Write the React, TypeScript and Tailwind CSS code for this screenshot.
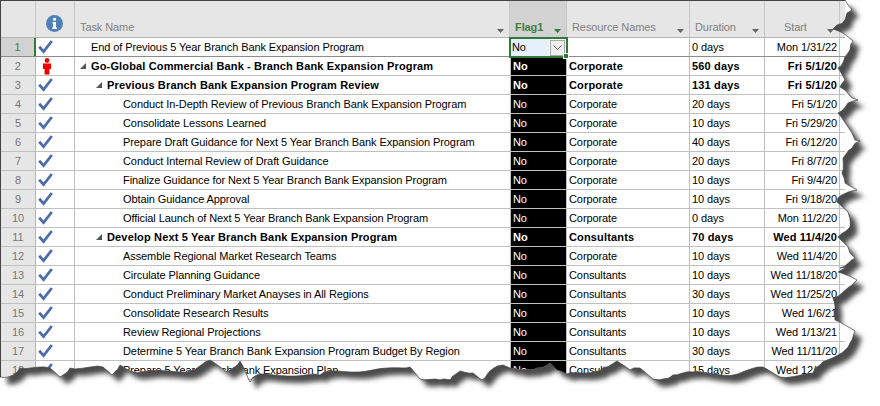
const rows = [
  { id: 1, task: "End of Previous 5 Year Branch Bank Expansion Program", level: 0, res: "", dur: "0 days", start: "Mon 1/31/22" },
  { id: 2, task: "Go-Global Commercial Bank - Branch Bank Expansion Program", level: 0, res: "Corporate", dur: "560 days", start: "Fri 5/1/20", bold: true },
  { id: 3, task: "Previous Branch Bank Expansion Program Review", level: 1, res: "Corporate", dur: "131 days", start: "Fri 5/1/20", bold: true },
  { id: 4, task: "Conduct In-Depth Review of Previous Branch Bank Expansion Program", level: 2, res: "Corporate", dur: "20 days", start: "Fri 5/1/20" },
  { id: 5, task: "Consolidate Lessons Learned", level: 2, res: "Corporate", dur: "10 days", start: "Fri 5/29/20" },
  { id: 6, task: "Prepare Draft Guidance for Next 5 Year Branch Bank Expansion Program", level: 2, res: "Corporate", dur: "40 days", start: "Fri 6/12/20" },
  { id: 7, task: "Conduct Internal Review of Draft Guidance", level: 2, res: "Corporate", dur: "20 days", start: "Fri 8/7/20" },
  { id: 8, task: "Finalize Guidance for Next 5 Year Branch Bank Expansion Program", level: 2, res: "Corporate", dur: "10 days", start: "Fri 9/4/20" },
  { id: 9, task: "Obtain Guidance Approval", level: 2, res: "Corporate", dur: "10 days", start: "Fri 9/18/20" },
  { id: 10, task: "Official Launch of Next 5 Year Branch Bank Expansion Program", level: 2, res: "Corporate", dur: "0 days", start: "Mon 11/2/20" },
  { id: 11, task: "Develop Next 5 Year Branch Bank Expansion Program", level: 1, res: "Consultants", dur: "70 days", start: "Wed 11/4/20", bold: true },
  { id: 12, task: "Assemble Regional Market Research Teams", level: 2, res: "Corporate", dur: "10 days", start: "Wed 11/4/20" },
  { id: 13, task: "Circulate Planning Guidance", level: 2, res: "Consultants", dur: "10 days", start: "Wed 11/18/20" },
  { id: 14, task: "Conduct Preliminary Market Anayses in All Regions", level: 2, res: "Consultants", dur: "30 days", start: "Wed 11/25/20" },
  { id: 15, task: "Consolidate Research Results", level: 2, res: "Consultants", dur: "10 days", start: "Wed 1/6/21" },
  { id: 16, task: "Review Regional Projections", level: 2, res: "Consultants", dur: "10 days", start: "Wed 1/13/21" },
  { id: 17, task: "Determine 5 Year Branch Bank Expansion Program Budget By Region", level: 2, res: "Consultants", dur: "30 days", start: "Wed 11/11/20" },
  { id: 18, task: "Prepare 5 Year Branch Bank Expansion Plan", level: 2, res: "Consultants", dur: "15 days", start: "Wed 12/2/20" },
];

// torn paper edge, traced clockwise from the top right corner
const traced =
  "845,0 848,5 852,10 847,13 845,20 837,25 833,29 843,33 853,41 850,50 845,57 838,68 845,80 840,87 845,90 852,98 858,100 848,103 838,113 848,127 852,133 855,140 860,141 852,148 843,158 842,173 845,183 857,190 838,198 837,202 848,212 850,227 838,237 848,247 850,253 855,258 840,268 848,265 838,272 857,280 852,285 833,298 835,310 835,320 855,331 850,343 838,355 820,365 813,373 807,374 780,377 763,367 733,375 693,372 673,375 663,379 653,379 640,368 630,370 617,361 603,368 587,373 567,374 557,370 550,363 537,368 520,370 510,368 503,365 490,371 482,380 473,373 460,371 450,380 440,380 420,379 410,367 367,371 333,371 320,375 257,375 250,382 240,361 227,372 210,360 190,371 133,372 120,365 112,375 103,367 70,368 60,377 50,368 20,368 8,377 0,377";

// roughen long segments a little so the tear doesn't look like straight lines
function roughen(points: string) {
  const pts = points.split(" ").map((p) => p.split(",").map(Number));
  const out: string[] = [];
  pts.forEach(([x, y], i) => {
    out.push(`${x},${y}`);
    const next = pts[i + 1];
    if (!next) return;
    const steps = Math.floor(Math.hypot(next[0] - x, next[1] - y) / 4);
    for (let s = 1; s < steps; s++) {
      const t = s / steps;
      const nudge = Math.sin(out.length * 12.9898) * 1.1;
      out.push(`${(x + (next[0] - x) * t + nudge).toFixed(1)},${(y + (next[1] - y) * t + nudge).toFixed(1)}`);
    }
  });
  return out.join(" ");
}

const edge = roughen(traced);

function Check() {
  return (
    <svg width="15" height="14" viewBox="0 0 15 14">
      <path d="M1.2 6.8 L5.6 11.6 L13.8 1" fill="none" stroke="#4c6cab" strokeWidth="2.8" />
    </svg>
  );
}

function Person() {
  return (
    <svg width="10" height="17" viewBox="0 0 10 17">
      <circle cx="5" cy="2.5" r="2.4" fill="#f00000" />
      <path d="M1 5.5 H9 V11 H7.4 V16.5 H2.6 V11 H1 Z" fill="#f00000" />
    </svg>
  );
}

function Info() {
  return (
    <svg width="17" height="17" viewBox="0 0 17 17">
      <circle cx="8.5" cy="8.5" r="8.5" fill="#4f81b8" />
      <rect x="7" y="3" width="3" height="2.6" fill="#fff" />
      <path d="M6.5 7 H10 V12.5 H11 V14 H6.2 V12.5 H7.2 V8.4 H6.5 Z" fill="#fff" />
    </svg>
  );
}

function Collapse() {
  return (
    <svg width="6" height="6" viewBox="0 0 6 6" className="shrink-0">
      <path d="M6 0 V6 H0 Z" fill="#555" />
    </svg>
  );
}

function HeaderCell({ label, className, sortClass }: { label: string; className: string; sortClass?: string }) {
  return (
    <div className={`flex items-end justify-between border-r border-[#c6c6c6] pb-[2px] ${className}`}>
      <span>{label}</span>
      <svg width="7" height="4" viewBox="0 0 7 4" className={`mb-[2px] ${sortClass ?? ""}`}>
        <path d="M0 0 H7 L3.5 4 Z" fill="currentColor" />
      </svg>
    </div>
  );
}

function Row({ r }: { r: (typeof rows)[number] }) {
  const selected = r.id === 1;
  const indent = ["pl-[16px]", "pl-[32px]", "pl-[48px]"][r.level];
  const hasChildren = r.id === 2 || r.id === 3 || r.id === 11;
  return (
    <div className={`flex h-[19px] border-b ${selected ? "border-[#8c8c8c]" : "border-[#c0c0c0]"} ${r.bold ? "font-bold tracking-[0.15px]" : ""}`}>
      <div
        className={`flex w-[35px] shrink-0 items-center justify-center border-r font-normal ${
          selected ? "border-r-2 border-[#2f7a3b] bg-[#d2d2d2] font-bold text-[#3f7f3f]" : "border-[#b4b4b4] bg-[#e6e6e6] text-[#777]"
        }`}
      >
        {r.id}
      </div>
      <div className={`flex w-[39px] shrink-0 items-center border-r border-[#c0c0c0] ${r.id === 2 ? "pl-[6px]" : "pl-[2px]"}`}>
        {r.id === 2 ? <Person /> : <Check />}
      </div>
      <div className={`relative flex w-[435px] shrink-0 items-center whitespace-nowrap ${indent}`}>
        {hasChildren && (
          <span className={`absolute top-[6px] ${r.level === 0 ? "left-[5px]" : "left-[21px]"}`}>
            <Collapse />
          </span>
        )}
        {r.task}
      </div>
      {selected ? (
        <div className="relative z-10 -my-[1px] -ml-[1px] mr-0 flex h-[21px] w-[59px] shrink-0 items-center border-2 border-[#2f7a3b] bg-white">
          <div className="flex h-full flex-1 items-center bg-[#e6f0fb] pl-[1px]">No</div>
          <div className="mx-[1px] flex h-[16px] w-[15px] items-center justify-center border border-[#a8a8a8] bg-[#efefef]">
            <svg width="9" height="5" viewBox="0 0 9 5">
              <path d="M0.5 0.5 L4.5 4.5 L8.5 0.5" fill="none" stroke="#666" />
            </svg>
          </div>
          <div className="absolute -bottom-[3px] -right-[3px] h-[6px] w-[6px] border border-white bg-[#2f7a3b]" />
        </div>
      ) : (
        <div className="flex w-[57px] shrink-0 items-center border-x border-[#c0c0c0] bg-black pl-[2px] text-white">No</div>
      )}
      <div className={`flex shrink-0 items-center border-r border-[#c0c0c0] pl-[2px] ${selected ? "w-[122px]" : "w-[123px]"}`}>{r.res}</div>
      <div className="flex w-[75px] shrink-0 items-center border-r border-[#c0c0c0] pl-[2px]">{r.dur}</div>
      <div className="flex w-[75px] shrink-0 items-center justify-end border-r border-[#c0c0c0] pr-[2px]">{r.start}</div>
    </div>
  );
}

export default function App() {
  return (
    <div className="relative h-[406px] w-[880px] overflow-hidden bg-white font-['Liberation_Sans',Arial,sans-serif] text-[11px] tracking-[-0.09px] text-black">
      <div className="w-[845px] border-l border-t border-[#444]">
        <div className="flex h-[37px] border-b border-[#b4b4b4] bg-[#e6e6e6] text-[#808080]">
          <div className="w-[35px] shrink-0 border-r border-[#c6c6c6]" />
          <div className="flex w-[39px] shrink-0 items-start justify-center border-r border-[#c6c6c6] pt-[14px] pr-[1px]">
            <Info />
          </div>
          <HeaderCell label="Task Name" className="w-[435px] shrink-0 pl-[5px] pr-[5px]" sortClass="text-[#666]" />
          <HeaderCell label="Flag1" className="w-[57px] shrink-0 bg-[#d2d2d2] pl-[5px] pr-[5px] font-bold text-[#3f7f3f]" sortClass="text-[#2f7a3b]" />
          <HeaderCell label="Resource Names" className="w-[123px] shrink-0 pl-[5px] pr-[5px]" sortClass="text-[#666]" />
          <HeaderCell label="Duration" className="w-[75px] shrink-0 pl-[5px] pr-[5px]" sortClass="text-[#666]" />
          <HeaderCell label="Start" className="w-[75px] shrink-0 pl-[19px] pr-[5px]" sortClass="text-[#666]" />
        </div>
        {rows.map((r) => (
          <Row key={r.id} r={r} />
        ))}
      </div>

      {/* torn paper effect over the screenshot */}
      <svg width="880" height="406" viewBox="0 0 880 406" className="absolute left-0 top-0 z-20">
        <defs>
          <filter id="soft" x="-5%" y="-5%" width="110%" height="110%">
            <feGaussianBlur stdDeviation="2.5" />
          </filter>
          <clipPath id="outside">
            <path clipRule="evenodd" d={`M0 0H880V406H0Z M0 0 L${edge} Z`} />
          </clipPath>
        </defs>
        <path fillRule="evenodd" fill="#fff" d={`M0 0H880V406H0Z M0 0 L${edge} Z`} />
        <g clipPath="url(#outside)">
          <path transform="translate(7 7)" d={`M0 0 L${edge} Z`} fill="#4c4c4c" filter="url(#soft)" />
        </g>
        <polyline points={edge} fill="none" stroke="#444" strokeWidth="0.7" />
      </svg>
    </div>
  );
}
